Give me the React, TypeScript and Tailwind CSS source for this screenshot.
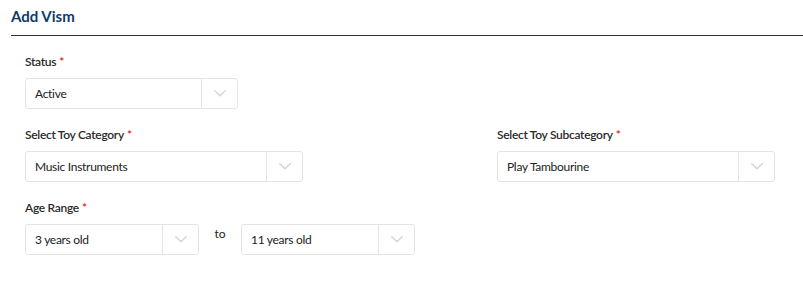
import React from "react";

function Chevron() {
  return (
    <svg width="12" height="7" viewBox="0 0 12 7" fill="none">
      <path d="M0.8 0.8 L6 5.8 L11.2 0.8" stroke="#cfd4d8" strokeWidth="1.3" strokeLinecap="round" strokeLinejoin="round" />
    </svg>
  );
}

function Select({ value, width }: { value: string; width: string }) {
  return (
    <div className={`flex h-[31px] items-stretch rounded-[3px] border border-[#e2e5e8] bg-white ${width}`}>
      <div className="flex flex-1 items-center pl-[9px] text-[12px] tracking-[-0.3px] text-[#222]">{value}</div>
      <div className="flex w-[36px] items-center justify-center border-l border-[#e2e5e8]">
        <Chevron />
      </div>
    </div>
  );
}

function Label({ text }: { text: string }) {
  return (
    <div className="mb-[8px] flex h-[16px] items-center text-[12px] font-semibold tracking-[-0.3px] text-[#2a2a2a]">
      {text}
      <span className="ml-[3px] text-[#e02020]">*</span>
    </div>
  );
}

export default function App() {
  return (
    <div className="h-[308px] w-[803px] bg-white" style={{ fontFamily: "Lato, 'Noto Sans', sans-serif" }}>
      <div className="pl-[11px]">
        <div className="flex h-[36px] items-center border-b border-[#0d3c69] pb-[2px] text-[15px] font-bold text-[#0d3c69]">
          Add Vism
        </div>
      </div>
      <div className="w-[775px] pl-[25px] pt-[18px]">
        <div>
          <Label text="Status" />
          <Select value="Active" width="w-[213px]" />
        </div>
        <div className="mt-[18px] flex justify-between">
          <div>
            <Label text="Select Toy Category" />
            <Select value="Music Instruments" width="w-[278px]" />
          </div>
          <div>
            <Label text="Select Toy Subcategory" />
            <Select value="Play Tambourine" width="w-[278px]" />
          </div>
        </div>
        <div className="mt-[18px]">
          <Label text="Age Range" />
          <div className="flex items-start">
            <Select value="3 years old" width="w-[174px]" />
            <div className="w-[42px] pt-[1px] text-center text-[12px] text-[#222]">to</div>
            <Select value="11 years old" width="w-[174px]" />
          </div>
        </div>
      </div>
    </div>
  );
}
